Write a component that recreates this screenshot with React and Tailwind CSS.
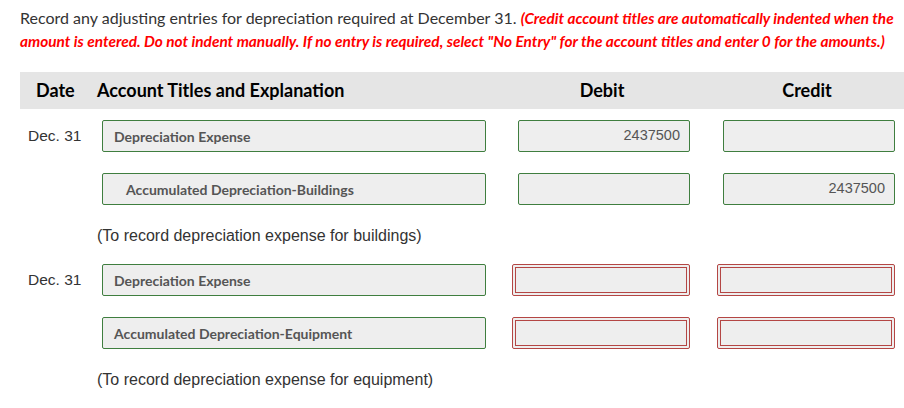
import React from "react";

const lato = { fontFamily: "Lato, 'Open Sans', sans-serif" };

function Field({ children, indent, align = "left", error }) {
  if (error) {
    return (
      <div className="ml-[-6px] h-8 rounded-[2px] border border-[#b44644] bg-[#eeeeee] p-[2px]">
        <div className="h-full w-full border border-[#b44644]" />
      </div>
    );
  }
  return (
    <div
      className={`flex h-8 items-center rounded-[2px] border border-[#3f7e3f] bg-[#eeeeee] ${
        align === "right" ? "justify-end pr-[9px]" : indent ? "pl-[23px]" : "pl-[11px]"
      }`}
    >
      {align === "right" ? (
        <span className="font-['Liberation_Sans',sans-serif] text-[14.5px] text-[#555]">{children}</span>
      ) : (
        <span className="font-['Lato',sans-serif] text-[14px] font-bold text-[#555]">{children}</span>
      )}
    </div>
  );
}

function EntryRow({ date, title, indent, debit, credit, error }) {
  return (
    <div className="grid h-8 grid-cols-[82px_384px_32px_172px_33px_172px] items-center">
      <div className="pl-[8px] font-['Liberation_Sans',sans-serif] text-[15.5px] text-[#333]">{date}</div>
      <Field indent={indent}>{title}</Field>
      <div />
      <Field align="right" error={error}>{debit}</Field>
      <div />
      <Field align="right" error={error}>{credit}</Field>
    </div>
  );
}

function Note({ children }) {
  return (
    <div className="pl-[77px] font-['Liberation_Sans',sans-serif] text-[16px] text-[#333]">{children}</div>
  );
}

export default function App() {
  return (
    <div className="h-[408px] w-[904px] overflow-hidden bg-white pl-5 pt-[6px]">
      <div className="text-[16px] leading-[23px] text-[#333]" style={lato}>
        <p className="whitespace-nowrap">
          Record any adjusting entries for depreciation required at December 31.{" "}
          <span className="text-[15.3px] font-bold italic text-[#ff0000]">
            (Credit account titles are automatically indented when the
          </span>
        </p>
        <p className="whitespace-nowrap text-[15.4px] font-bold italic text-[#ff0000]">
          amount is entered. Do not indent manually. If no entry is required, select "No Entry" for the account titles
          and enter 0 for the amounts.)
        </p>
      </div>

      <div
        className="mt-[19px] grid h-[37px] grid-cols-[77px_421px_172px_33px_172px] items-center bg-[#e5e5e5] text-[18px] font-bold text-black"
        style={lato}
      >
        <div className="pl-4">Date</div>
        <div>Account Titles and Explanation</div>
        <div className="pr-1 text-center">Debit</div>
        <div />
        <div className="pr-1 text-center">Credit</div>
      </div>

      <div className="mt-[11px] flex flex-col">
        <EntryRow date="Dec. 31" title="Depreciation Expense" debit="2437500" />
        <div className="mt-[21px]">
          <EntryRow title="Accumulated Depreciation-Buildings" indent credit="2437500" />
        </div>
        <div className="mt-[19px]">
          <Note>(To record depreciation expense for buildings)</Note>
        </div>
        <div className="mt-[16px]">
          <EntryRow date="Dec. 31" title="Depreciation Expense" error />
        </div>
        <div className="mt-[21px]">
          <EntryRow title="Accumulated Depreciation-Equipment" error />
        </div>
        <div className="mt-[19px]">
          <Note>(To record depreciation expense for equipment)</Note>
        </div>
      </div>
    </div>
  );
}
